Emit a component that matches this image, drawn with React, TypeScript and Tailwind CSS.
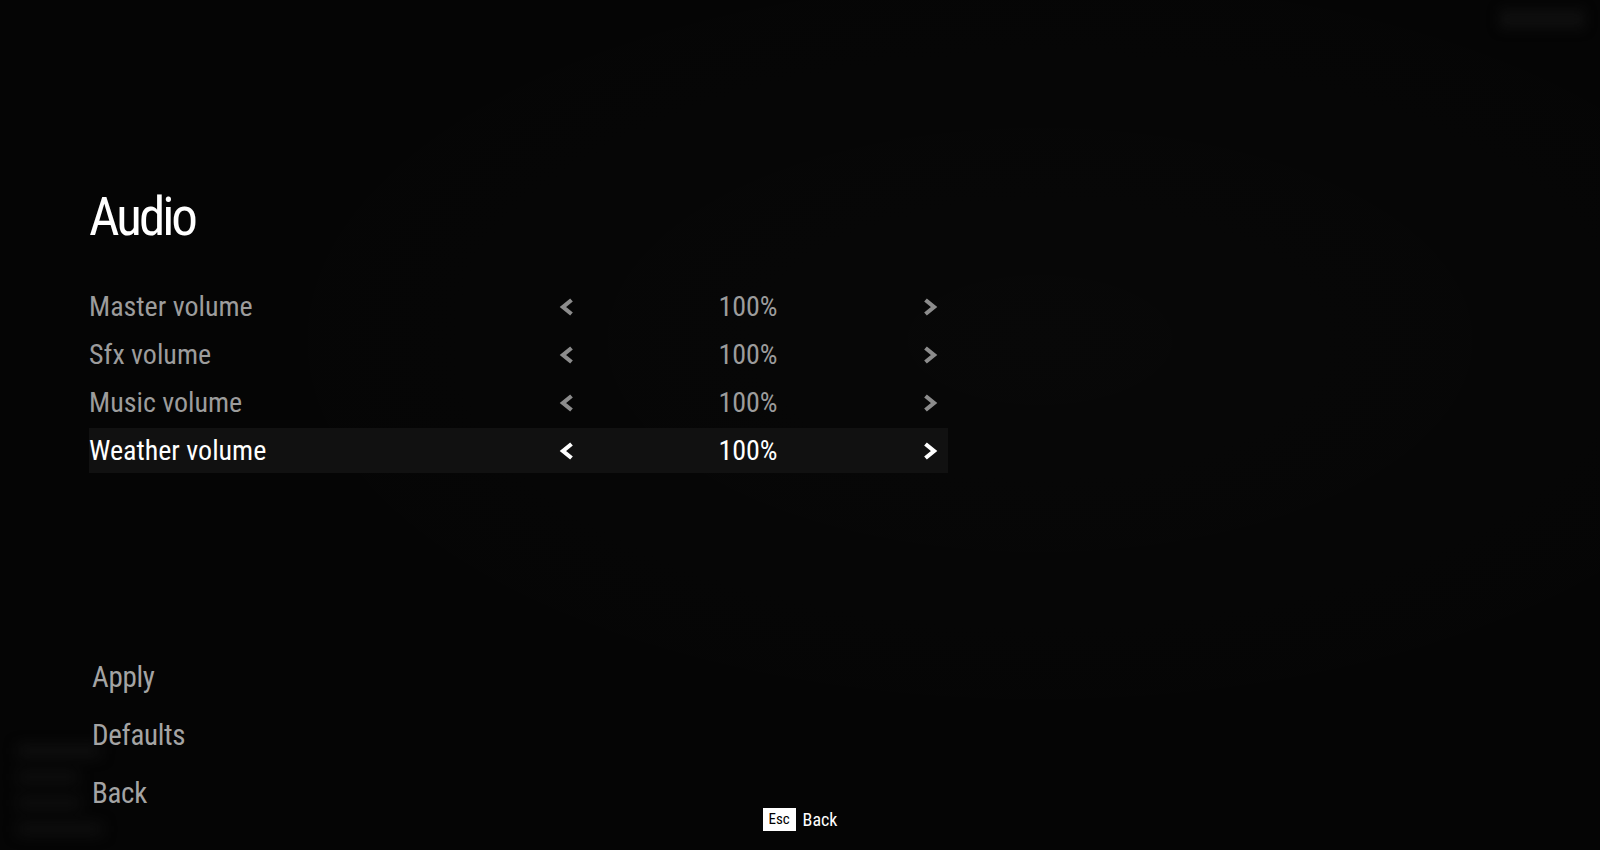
import { ReactNode } from "react";

const ROWS = [
  { label: "Master volume", value: "100%" },
  { label: "Sfx volume", value: "100%" },
  { label: "Music volume", value: "100%" },
  { label: "Weather volume", value: "100%", active: true },
];

function Chevron({ dir, active }: { dir: "left" | "right"; active?: boolean }) {
  return (
    <svg
      viewBox="0 0 15 18"
      className={`h-[18px] w-[15px] ${active ? "text-white" : "text-[#8c8c8c]"}`}
      fill="none"
      stroke="currentColor"
      strokeWidth={4.2}
      strokeLinejoin="miter"
    >
      {dir === "left" ? <polyline points="12.5,2 4,9 12.5,16" /> : <polyline points="2.5,2 11,9 2.5,16" />}
    </svg>
  );
}

function Row({ label, value, active }: { label: string; value: string; active?: boolean }) {
  return (
    <div
      className={`grid h-[45px] w-[859px] grid-cols-[462px_30px_334px_30px] items-center ${
        active ? "bg-[#111111] text-white" : "text-[#9c9c9c]"
      }`}
    >
      <span className="text-[28px] leading-none">{label}</span>
      <span className="flex justify-center">
        <Chevron dir="left" active={active} />
      </span>
      <span className="text-center text-[28px] leading-none">{value}</span>
      <span className="flex justify-center">
        <Chevron dir="right" active={active} />
      </span>
    </div>
  );
}

function MenuButton({ children }: { children: ReactNode }) {
  return (
    <div className="flex h-[58px] items-center text-[29px] leading-none tracking-[-0.3px] text-[#a4a4a4] [font-stretch:75%]">
      {children}
    </div>
  );
}

export default function App() {
  return (
    <div className="relative h-[850px] w-full overflow-hidden bg-[#050505] font-['Roboto',sans-serif] font-normal [font-stretch:80%]">
      {/* blurred game HUD behind the menu */}
      <div className="pointer-events-none absolute inset-0 bg-[radial-gradient(ellipse_at_65%_40%,rgba(255,255,255,0.012),transparent_60%)]" />
      <div className="pointer-events-none absolute bottom-[16px] left-[18px] flex flex-col gap-[16px] blur-[7px]">
        <div className="h-[10px] w-[82px] bg-[#121212]" />
        <div className="h-[10px] w-[60px] bg-[#101010]" />
        <div className="h-[10px] w-[62px] bg-[#101010]" />
        <div className="h-[10px] w-[84px] bg-[#111111]" />
      </div>
      <div className="pointer-events-none absolute right-[16px] top-[10px] h-[18px] w-[84px] bg-[#0f0f0f] blur-[6px]" />

      <div className="relative flex flex-col pl-[89px] pt-[191px]">
        <h1 className="text-[53px] leading-none font-normal tracking-[-3px] text-white [font-stretch:75%]">Audio</h1>

        <div className="mt-[40px] flex flex-col gap-[3px]">
          {ROWS.map((r) => (
            <Row key={r.label} {...r} />
          ))}
        </div>

        <div className="mt-[175px] flex flex-col pl-[3px]">
          <MenuButton>Apply</MenuButton>
          <MenuButton>Defaults</MenuButton>
          <MenuButton>Back</MenuButton>
        </div>
      </div>

      <div className="absolute bottom-[19px] left-0 right-0 flex items-center justify-center gap-[7px]">
        <span className="flex h-[23px] w-[33px] items-center justify-center bg-white text-[15px] leading-none text-black">
          Esc
        </span>
        <span className="text-[18px] leading-none text-white">Back</span>
      </div>
    </div>
  );
}
